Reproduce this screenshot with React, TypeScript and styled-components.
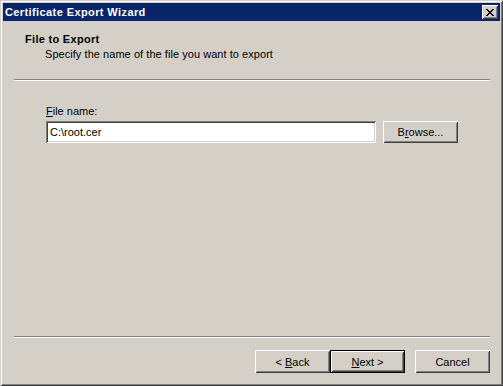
import styled, { createGlobalStyle } from 'styled-components'

const GlobalStyle = createGlobalStyle`
  html, body {
    margin: 0;
    padding: 0;
    background: #d4d0c8;
  }
  * {
    box-sizing: border-box;
  }
`

const Window = styled.div`
  width: 503px;
  height: 386px;
  padding: 3px;
  display: flex;
  flex-direction: column;
  background: #d4d0c8;
  font-family: 'Liberation Sans', Arial, sans-serif;
  font-size: 11px;
  color: #000;
  box-shadow:
    inset 1px 1px #d4d0c8,
    inset -1px -1px #404040,
    inset 2px 2px #ffffff,
    inset -2px -2px #808080;
`

const TitleBar = styled.div`
  height: 18px;
  display: flex;
  align-items: center;
  justify-content: space-between;
  padding: 0 2px 0 2px;
  background: #0a246a;
  color: #fff;
  font-weight: bold;
  letter-spacing: 0.4px;
`

const CloseButton = styled.div`
  width: 16px;
  height: 14px;
  display: flex;
  align-items: center;
  justify-content: center;
  background: #d4d0c8;
  box-shadow:
    inset 1px 1px #ffffff,
    inset -1px -1px #404040,
    inset 2px 2px #d4d0c8,
    inset -2px -2px #808080;
`

const Header = styled.div`
  height: 58px;
  padding: 11px 0 0 22px;
  line-height: 14px;
`

const HeaderTitle = styled.div`
  font-weight: bold;
  letter-spacing: 0.3px;
`

const HeaderSub = styled.div`
  padding-left: 20px;
  margin-top: 1px;
  letter-spacing: 0.05px;
`

const Separator = styled.div`
  height: 2px;
  margin: 0 10px 0 11px;
  border-top: 1px solid #808080;
  border-bottom: 1px solid #ffffff;
`

const Body = styled.div`
  flex: 1;
  padding: 24px 0 0 43px;
`

const Label = styled.div`
  line-height: 13px;
  margin-bottom: 3px;
`

const Row = styled.div`
  display: flex;
  gap: 7px;
`

const TextBox = styled.div`
  width: 330px;
  height: 22px;
  display: flex;
  align-items: center;
  padding-left: 4px;
  background: #fff;
  box-shadow:
    inset 1px 1px #808080,
    inset -1px -1px #ffffff,
    inset 2px 2px #404040,
    inset -2px -2px #d4d0c8;
`

const Button = styled.div<{ $default?: boolean; $h?: number }>`
  width: 75px;
  height: ${p => p.$h ?? 23}px;
  display: flex;
  align-items: center;
  justify-content: center;
  background: #d4d0c8;
  box-shadow: ${p =>
    p.$default
      ? `inset 1px 1px #000, inset -1px -1px #000,
         inset 2px 2px #ffffff, inset -2px -2px #404040,
         inset 3px 3px #d4d0c8, inset -3px -3px #808080`
      : `inset 1px 1px #ffffff, inset -1px -1px #404040,
         inset 2px 2px #d4d0c8, inset -2px -2px #808080`};
`

const Footer = styled.div`
  height: 45px;
  display: flex;
  justify-content: flex-end;
  padding: 12px 10px 0 0;
`

const Gap = styled.div`
  width: 10px;
`

export default function App() {
  return (
    <>
      <GlobalStyle />
      <Window>
        <TitleBar>
          <span>Certificate Export Wizard</span>
          <CloseButton>
            <svg width="8" height="7" viewBox="0 0 8 7" shapeRendering="crispEdges">
              <path
                d="M0 0h2v1h-2zM6 0h2v1h-2zM1 1h2v1h-2zM5 1h2v1h-2zM2 2h4v1h-4zM3 3h2v1h-2zM2 4h4v1h-4zM1 5h2v1h-2zM5 5h2v1h-2zM0 6h2v1h-2zM6 6h2v1h-2z"
                fill="#000"
              />
            </svg>
          </CloseButton>
        </TitleBar>
        <Header>
          <HeaderTitle>File to Export</HeaderTitle>
          <HeaderSub>Specify the name of the file you want to export</HeaderSub>
        </Header>
        <Separator />
        <Body>
          <Label>
            <u>F</u>ile name:
          </Label>
          <Row>
            <TextBox>C:\root.cer</TextBox>
            <Button $h={22}>
              B<u>r</u>owse...
            </Button>
          </Row>
        </Body>
        <Separator />
        <Footer>
          <Button>
            &lt;&nbsp;<u>B</u>ack
          </Button>
          <Button $default>
            <u>N</u>ext &gt;
          </Button>
          <Gap />
          <Button>Cancel</Button>
        </Footer>
      </Window>
    </>
  )
}
